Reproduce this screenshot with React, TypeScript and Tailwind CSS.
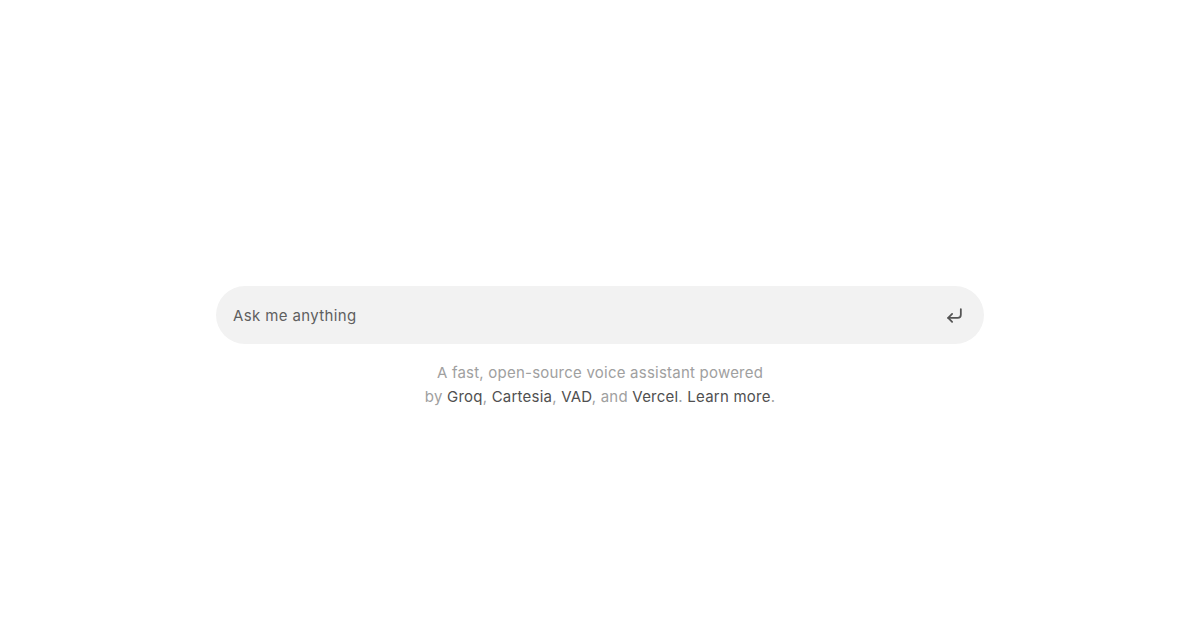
import { CornerDownLeft } from "lucide-react";

const link = "text-[#505050]";

export default function App() {
  return (
    <main className="grid h-[630px] w-full grid-rows-[1fr_auto_1fr] items-center bg-white px-4 font-['Inter',sans-serif]">
      <div />
      <form
        className="mx-auto flex h-[58px] w-full max-w-3xl items-center rounded-full bg-[#f2f2f2] pl-[17px] pr-5"
        onSubmit={(e) => e.preventDefault()}
      >
        <input
          placeholder="Ask me anything"
          className="h-full flex-1 bg-transparent text-[15px] tracking-[0.025em] text-[#555] outline-none placeholder:text-[#5f5f5f]"
        />
        <button type="submit" className="text-[#555]" aria-label="Submit">
          <CornerDownLeft size={19} strokeWidth={2.25} />
        </button>
      </form>
      <div className="self-start pt-[17px] text-center">
        <p className="text-[15px] leading-6 tracking-[0.015em] text-[#a0a0a0]">
          A fast, open-source voice assistant powered
          <br />
          by <a href="#" className={link}>Groq</a>,{" "}
          <a href="#" className={link}>Cartesia</a>,{" "}
          <a href="#" className={link}>VAD</a>, and{" "}
          <a href="#" className={link}>Vercel</a>.{" "}
          <a href="#" className={link}>Learn more</a>.
        </p>
      </div>
    </main>
  );
}
